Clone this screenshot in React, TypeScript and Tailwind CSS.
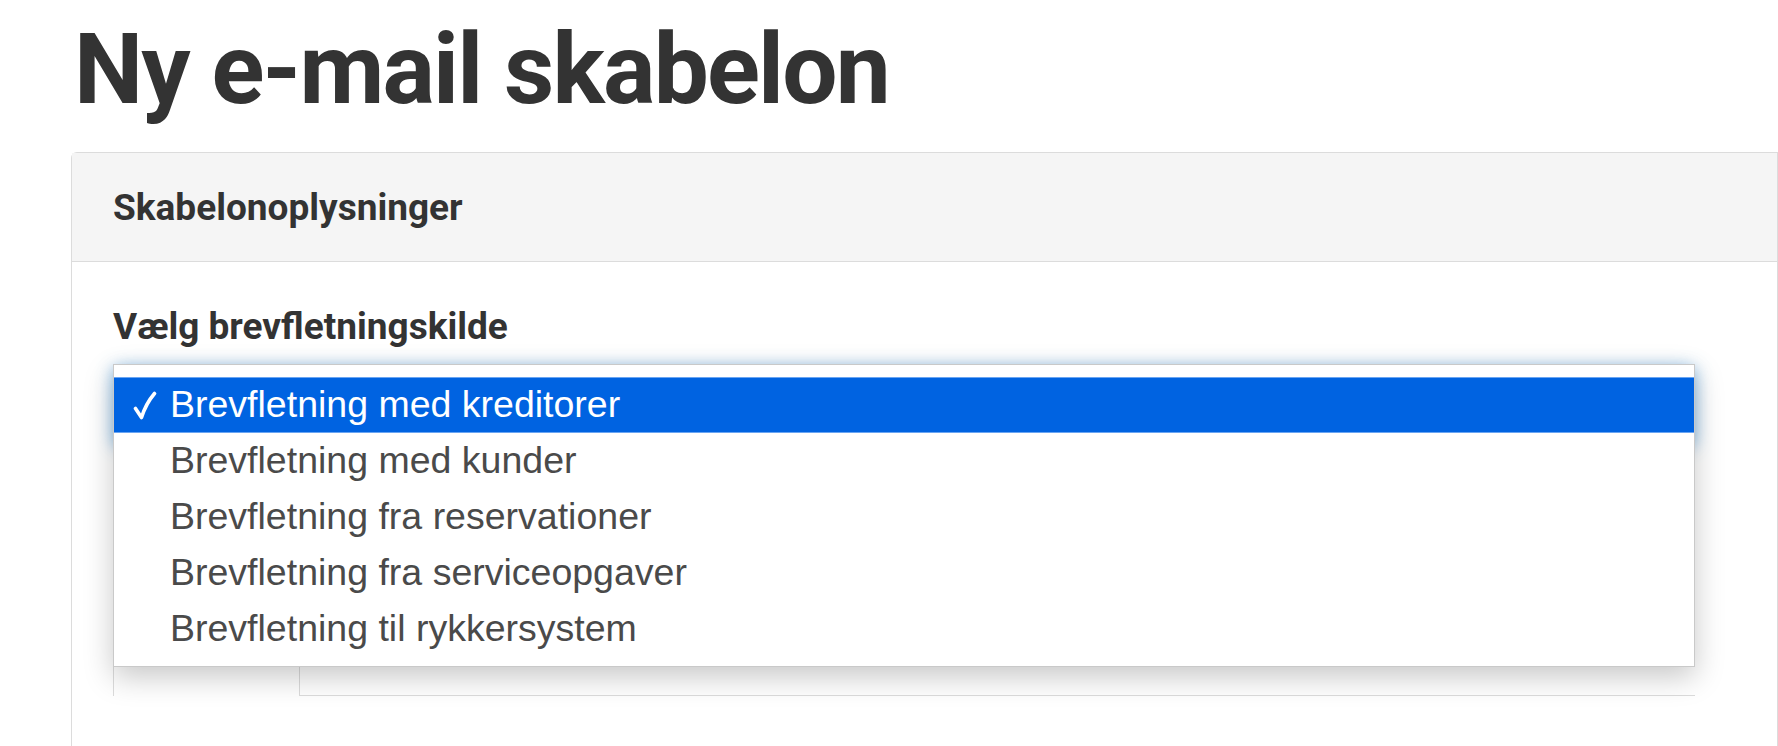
const sources = [
  'Brevfletning med kreditorer',
  'Brevfletning med kunder',
  'Brevfletning fra reservationer',
  'Brevfletning fra serviceopgaver',
  'Brevfletning til rykkersystem',
];

function CheckMark() {
  return (
    <svg className="absolute left-[19px] top-[13px] h-[30px] w-[24px]" viewBox="0 0 24 30" fill="none">
      <path d="M2.5 17.5 L8.5 26.5 C11.5 17 15.5 9.5 21.5 2.5" stroke="white" strokeWidth={3.6} strokeLinecap="round" strokeLinejoin="round" />
    </svg>
  );
}

function SourceMenu({ selected }: { selected: number }) {
  return (
    <div className="absolute left-0 top-[-3px] z-10 w-full border border-[#c9c9c9] bg-white pt-[12px] pb-[9px] shadow-[0_10px_28px_rgba(0,0,0,0.22)]">
      {sources.map((s, i) => (
        <div
          key={s}
          className={`relative flex h-[56px] items-center pl-[56px] font-['Liberation_Sans',Arial,sans-serif] text-[37.5px] leading-none ${
            i === selected
              ? 'border-y border-[#6aa5f2] bg-[#0063e1] text-white'
              : 'text-[#4a4a4a]'
          }`}
        >
          {i === selected && <CheckMark />}
          {s}
        </div>
      ))}
    </div>
  );
}

export default function App() {
  return (
    <div className="h-[746px] w-[1778px] overflow-hidden bg-white font-['Roboto',sans-serif] text-[#333]">
      <h1 className="pl-[74px] pt-[21px] text-[98px] font-bold leading-none tracking-[-1.8px]">Ny e-mail skabelon</h1>

      <div className="ml-[71px] mt-[33px] h-[600px] rounded-tl-[6px] border-l border-t border-[#dcdcdc] border-r">
        <div className="flex h-[109px] items-center border-b border-[#dcdcdc] bg-[#f5f5f5] px-[41px]">
          <h2 className="text-[37px] font-bold leading-none">Skabelonoplysninger</h2>
        </div>

        <div className="px-[41px] pt-[46px]">
          <label className="block text-[37px] font-bold leading-none">Vælg brevfletningskilde</label>

          <div className="relative mt-[22px] w-[1582px]">
            <div className="h-[80px] rounded-[6px] border border-[#66afe9] bg-white shadow-[0_0_16px_rgba(102,175,233,0.8)]" />
            <div className="mt-[42px] h-[52px] rounded-[4px] border border-[#b5b5b5] bg-white" />
            <div className="mt-[101px] flex h-[54px] items-end">
              <div className="h-full w-[187px] rounded-t-[6px] border-x border-t border-[#dcdcdc]" />
              <div className="flex-1 border-b border-[#dcdcdc]" />
            </div>
            <SourceMenu selected={0} />
          </div>
        </div>
      </div>
    </div>
  );
}
